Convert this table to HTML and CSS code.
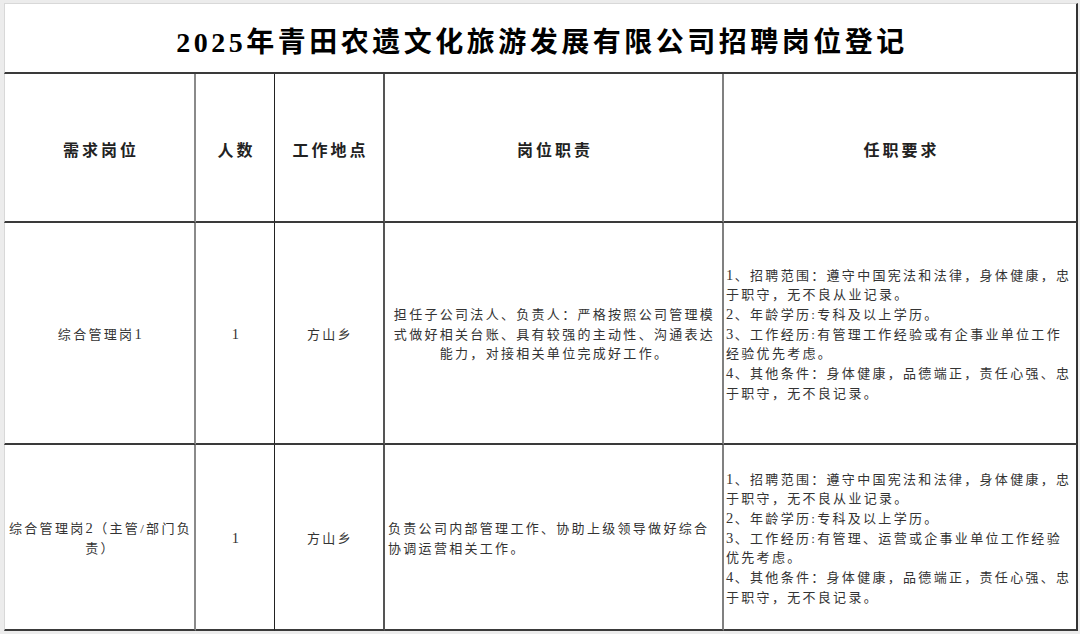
FILE: index.html
```html
<!DOCTYPE html>
<html lang="zh-CN">
<head>
<meta charset="utf-8">
<title>2025年青田农遗文化旅游发展有限公司招聘岗位登记</title>
<link rel="stylesheet" href="styles.css">
</head>
<body>
<div class="sheet">
  <div class="cell title"><span class="title-text">2025年青田农遗文化旅游发展有限公司招聘岗位登记</span></div>

  <div class="cell head c1">需求岗位</div>
  <div class="cell head c2">人数</div>
  <div class="cell head c3">工作地点</div>
  <div class="cell head c4">岗位职责</div>
  <div class="cell head c5">任职要求</div>

  <div class="cell body center c1"><p class="lines">综合管理岗<span class="num">1</span></p></div>
  <div class="cell body center c2"><p class="lines"><span class="num">1</span></p></div>
  <div class="cell body center c3"><p class="lines">方山乡</p></div>
  <div class="cell body center c4"><p class="lines">担任子公司法人、负责人：严格按照公司管理模<br>式做好相关台账、具有较强的主动性、沟通表达<br>能力，对接相关单位完成好工作。</p></div>
  <div class="cell body left c5"><p class="lines"><span class="num">1</span>、招聘范围：遵守中国宪法和法律，身体健康，忠<br>于职守，无不良从业记录。<br><span class="num">2</span>、年龄学历:专科及以上学历。<br><span class="num">3</span>、工作经历:有管理工作经验或有企事业单位工作<br>经验优先考虑。<br><span class="num">4</span>、其他条件：身体健康，品德端正，责任心强、忠<br>于职守，无不良记录。</p></div>

  <div class="cell body center c1 last"><p class="lines">综合管理岗<span class="num">2</span>（主管/部门负<br>责）</p></div>
  <div class="cell body center c2 last"><p class="lines"><span class="num">1</span></p></div>
  <div class="cell body center c3 last"><p class="lines">方山乡</p></div>
  <div class="cell body left c4 last"><p class="lines">负责公司内部管理工作、协助上级领导做好综合<br>协调运营相关工作。</p></div>
  <div class="cell body left c5 last"><p class="lines"><span class="num">1</span>、招聘范围：遵守中国宪法和法律，身体健康，忠<br>于职守，无不良从业记录。<br><span class="num">2</span>、年龄学历:专科及以上学历。<br><span class="num">3</span>、工作经历:有管理、运营或企事业单位工作经验<br>优先考虑。<br><span class="num">4</span>、其他条件：身体健康，品德端正，责任心强、忠<br>于职守，无不良记录。</p></div>
</div>
</body>
</html>
```

FILE: styles.css
```css
html, body {
  margin: 0;
  padding: 0;
}

body {
  background: #ececec;
  width: 1080px;
  height: 634px;
  overflow: hidden;
  font-family: "Liberation Serif", "Noto Sans CJK SC", serif;
}

.sheet {
  margin: 3px 0 0 4px;
  width: 1074px;
  display: grid;
  grid-template-columns: 192px 79px 110px 339px 354px;
  grid-template-rows: 71px 149px 222px 186px;
  background: #ffffff;
}

.cell {
  box-sizing: border-box;
  border-bottom: 2px solid #3a3a3a;
  display: flex;
  flex-direction: column;
  justify-content: center;
  min-width: 0;
}

.title {
  grid-column: 1 / -1;
  border-top: 1px solid #d8d8d8;
  border-left: 1px solid #d8d8d8;
  border-right: 2px solid #333333;
  align-items: center;
  padding-top: 3px;
  padding-left: 3px;
  color: #000000;
  white-space: nowrap;
}

.title-text {
  font-size: 28px;
  font-weight: bold;
  letter-spacing: 3.5px;
}

.c1 { border-left: 1px solid #d8d8d8; border-right: 2px solid #8a8a8a; }
.c2 { border-right: 1px solid #222222; }
.c3 { border-right: 2px solid #555555; }
.c4 { border-right: 2px solid #808080; }
.c5 { border-right: 2px solid #333333; }

.head {
  align-items: center;
  text-align: center;
  padding-top: 3px;
  padding-left: 3px;
  font-size: 16px;
  font-weight: bold;
  letter-spacing: 3px;
  color: #222222;
}

.body {
  font-size: 13px;
  letter-spacing: 2.3px;
  line-height: 19.7px;
  color: #333333;
  padding-top: 3px;
}

.num {
  font-size: 14.5px;
  letter-spacing: 1.5px;
}

.center {
  align-items: center;
  text-align: center;
  padding-left: 2px;
}

.left {
  align-items: flex-start;
  text-align: left;
  padding-left: 2px;
}

.c4.left {
  padding-left: 3px;
}

.lines {
  margin: 0;
  white-space: nowrap;
}
```
